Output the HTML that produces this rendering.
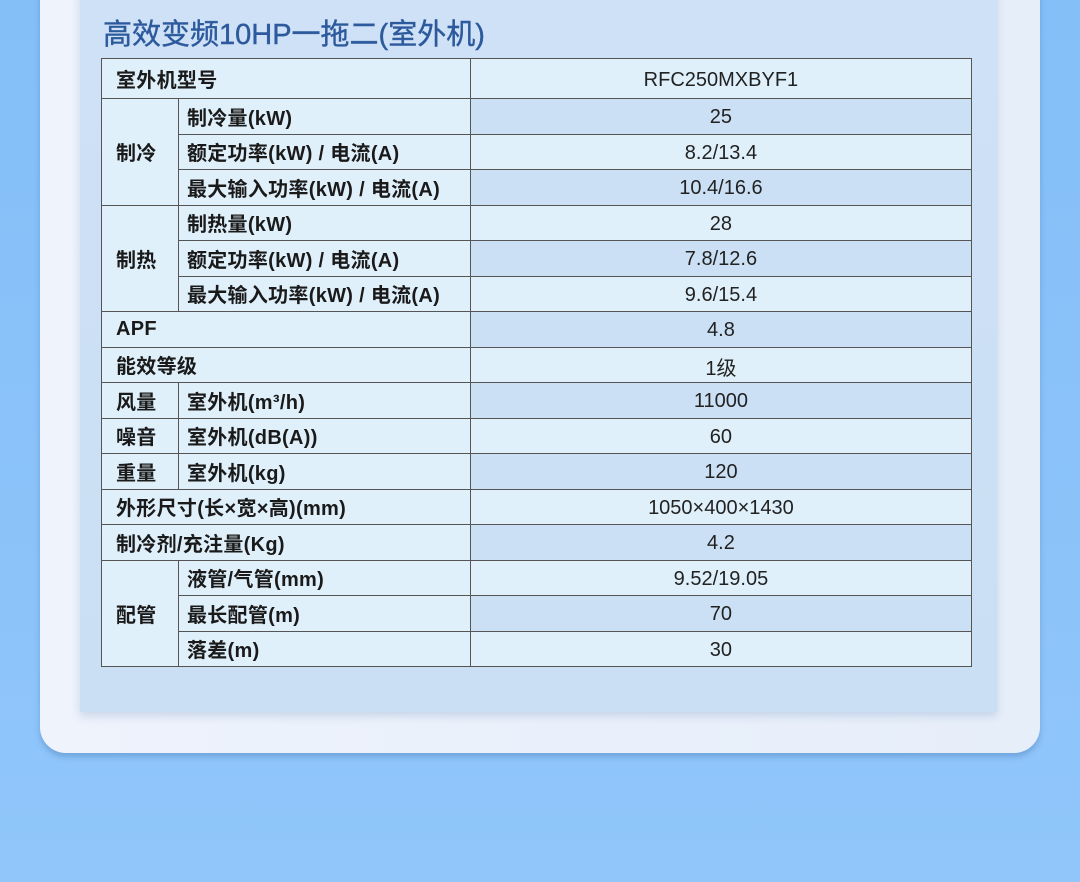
<!DOCTYPE html>
<html><head><meta charset="utf-8"><style>
*{margin:0;padding:0;box-sizing:border-box}
body{width:1080px;height:882px;overflow:hidden;background:linear-gradient(180deg,#84bff8,#90c6fa);font-family:"Liberation Sans","Noto Sans CJK SC",sans-serif;position:relative}
.card{position:absolute;left:40px;top:-30px;width:1000px;height:783px;background:linear-gradient(90deg,#eef3fc,#e6eefa);border-radius:0 0 26px 26px;box-shadow:0 4px 6px rgba(60,110,170,.35)}
.panel{position:absolute;left:80px;top:-10px;width:917px;height:722px;background:linear-gradient(180deg,#cfe1f6,#cadff4);box-shadow:0 4px 8px rgba(120,150,190,.3)}
h1{position:absolute;left:103px;top:11px;font-size:29px;font-weight:normal;color:#2c5a9c;white-space:nowrap;-webkit-text-stroke:0.4px #2c5a9c}
table{position:absolute;left:101px;top:58px;border-collapse:collapse;width:871px;font-size:20px;color:#1a1a1a}
td{border:1px solid #555;height:35.5px;padding:0 0 0 8px;background:#dff0fb;font-weight:bold;white-space:nowrap;letter-spacing:0.3px}
td.v{text-align:center;font-weight:normal;padding:3px 0 0;color:#222;letter-spacing:0}
td.d{background:#cbe0f5}
td.c{padding-left:14px}
</style></head><body>
<div class="card"></div>
<div class="panel"></div>
<h1>高效变频10HP一拖二(室外机)</h1>
<table>
<colgroup><col style="width:77px"><col style="width:292px"><col style="width:502px"></colgroup>
<tr style="height:40px"><td colspan="2" class="c">室外机型号</td><td class="v">RFC250MXBYF1</td></tr>
<tr><td rowspan="3" class="c">制冷</td><td>制冷量(kW)</td><td class="v d">25</td></tr>
<tr><td>额定功率(kW) / 电流(A)</td><td class="v">8.2/13.4</td></tr>
<tr><td>最大输入功率(kW) / 电流(A)</td><td class="v d">10.4/16.6</td></tr>
<tr><td rowspan="3" class="c">制热</td><td>制热量(kW)</td><td class="v">28</td></tr>
<tr><td>额定功率(kW) / 电流(A)</td><td class="v d">7.8/12.6</td></tr>
<tr><td>最大输入功率(kW) / 电流(A)</td><td class="v">9.6/15.4</td></tr>
<tr><td colspan="2" class="c">APF</td><td class="v d">4.8</td></tr>
<tr><td colspan="2" class="c">能效等级</td><td class="v">1级</td></tr>
<tr><td class="c">风量</td><td>室外机(m³/h)</td><td class="v d">11000</td></tr>
<tr><td class="c">噪音</td><td>室外机(dB(A))</td><td class="v">60</td></tr>
<tr><td class="c">重量</td><td>室外机(kg)</td><td class="v d">120</td></tr>
<tr><td colspan="2" class="c">外形尺寸(长×宽×高)(mm)</td><td class="v">1050×400×1430</td></tr>
<tr><td colspan="2" class="c">制冷剂/充注量(Kg)</td><td class="v d">4.2</td></tr>
<tr><td rowspan="3" class="c">配管</td><td>液管/气管(mm)</td><td class="v">9.52/19.05</td></tr>
<tr><td>最长配管(m)</td><td class="v d">70</td></tr>
<tr><td>落差(m)</td><td class="v">30</td></tr>
</table>
</body></html>
